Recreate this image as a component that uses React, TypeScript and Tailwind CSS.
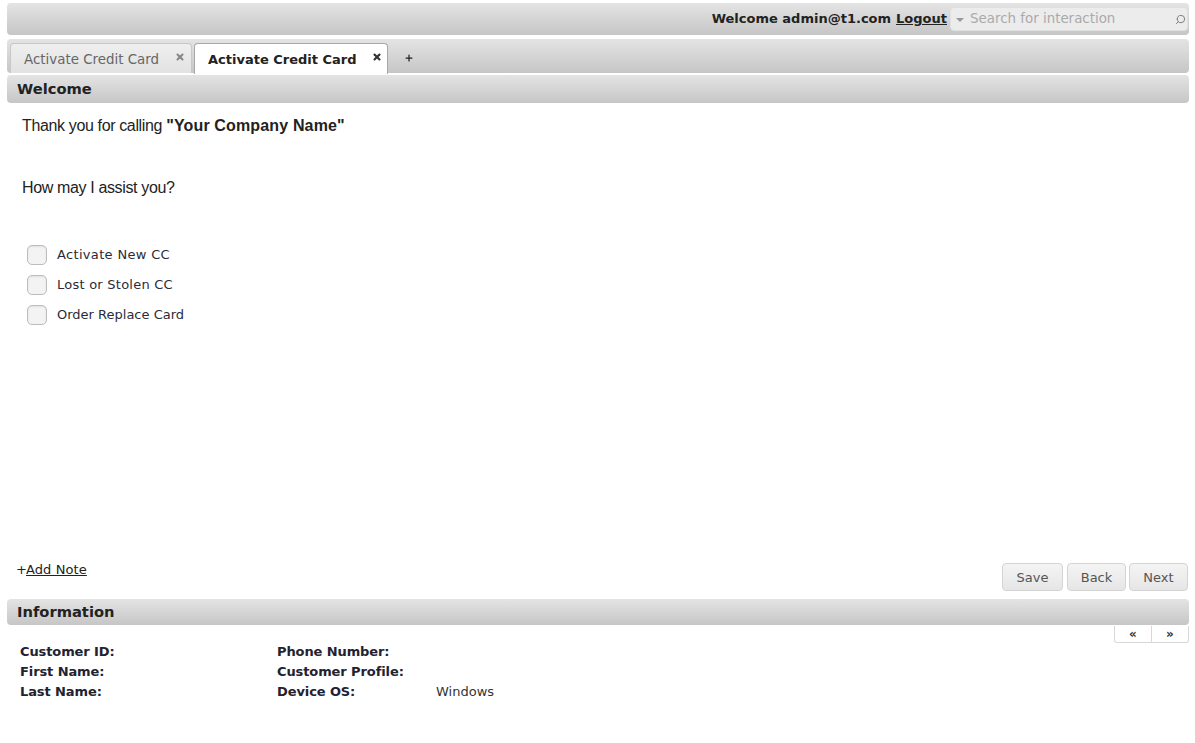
import React from 'react';
import { Search, X, Plus } from 'lucide-react';

const barClass = "bg-gradient-to-b from-[#e4e4e4] to-[#c6c6c6] rounded-[4px]";

const SectionBar = ({ title, className }: { title: string; className: string }) => (
  <div className={`${barClass} ${className} flex items-center pl-[10px] text-[14.7px] font-bold text-[#222222]`}>
    {title}
  </div>
);

const Option = ({ label, tracking }: { label: string; tracking: string }) => (
  <label className="flex items-center h-[30px]">
    <span className="w-5 h-5 rounded-[5px] border border-[#bdbdbd] bg-[#f3f3f3] shadow-[inset_0_1px_2px_rgba(0,0,0,0.08)]" />
    <span className={`ml-[10px] text-[13px] text-[#2b2b38] ${tracking}`}>{label}</span>
  </label>
);

const ActionButton = ({ label, width }: { label: string; width: string }) => (
  <button className={`${width} h-[28px] pt-[2px] rounded-[4px] border border-[#d4d4d4] bg-gradient-to-b from-[#f4f4f4] to-[#e6e6e6] text-[13px] text-[#555555]`}>
    {label}
  </button>
);

const InfoRow = ({ label, labelWidth, value }: { label: string; labelWidth?: string; value?: string }) => (
  <div className="flex items-center h-5 text-[13px]">
    <span className={`font-bold text-[#222230] tracking-[-0.1px] ${labelWidth ?? ''}`}>{label}</span>
    {value && <span className="text-[#333333]">{value}</span>}
  </div>
);

export default function App() {
  return (
    <div className="h-[743px] bg-white pl-[7px] pr-[6px] pt-[3px] flex flex-col font-['DejaVu_Sans','Liberation_Sans',sans-serif] overflow-hidden">
      {/* top bar */}
      <div className={`${barClass} h-[32px] shrink-0 flex items-center justify-end pr-[1px]`}>
        <span className="text-[13px] font-bold text-[#222222]">Welcome admin@t1.com</span>
        <a className="ml-[5px] text-[13px] font-bold text-[#222222] underline">Logout</a>
        <div className="ml-[3px] w-[238px] h-[24px] rounded-[4px] bg-[#ececec] border border-[#e0e0e0] flex items-center pl-[5px] pr-[1px]">
          <span className="w-0 h-0 border-x-[4px] border-x-transparent border-t-[4px] border-t-[#999999] mt-[1px]" />
          <span className="ml-[6px] text-[13.4px] text-[#aaaaaa] flex-1">Search for interaction</span>
          <Search className="w-[11px] h-[11px] text-[#777777] -scale-x-100" strokeWidth={2} />
        </div>
      </div>

      {/* tabs */}
      <div className={`${barClass} h-[34px] mt-[4px] shrink-0 flex items-end pl-[3px]`}>
        <div className="w-[182px] h-[30px] rounded-t-[4px] border border-b-0 border-[#c8c8c8] bg-gradient-to-b from-[#efefef] to-[#e2e2e2] flex items-center pl-[13px] pt-[3px] text-[13.4px] text-[#666666]">
          <span className="flex-1">Activate Credit Card</span>
          <X className="w-[10px] h-[10px] mr-[6px] mb-[7px] text-[#888888]" strokeWidth={5} />
        </div>
        <div className="ml-[2px] w-[194px] h-[31px] -mb-[1px] rounded-t-[4px] border border-b-0 border-[#a8a8a8] bg-white flex items-center pl-[13px] pt-[2px] text-[13px] font-bold text-[#222222] relative">
          <span className="flex-1">Activate Credit Card</span>
          <X className="w-[10px] h-[10px] mr-[5px] mb-[6px] text-[#333333]" strokeWidth={5} />
        </div>
        <Plus className="w-[10px] h-[10px] ml-[16px] mb-[10px] text-[#222222]" strokeWidth={3} />
      </div>

      <SectionBar title="Welcome" className="h-[28px] mt-[2px] shrink-0" />

      {/* script body */}
      <div className="flex-1 relative flex flex-col min-h-0">
        <div className="pl-[15px] pt-[13px] font-['Liberation_Sans',sans-serif] text-[16px] leading-[20px] text-[#222222] tracking-[-0.36px]">
          <p>Thank you for calling <b className="tracking-[0.15px]">"Your Company Name"</b></p>
          <p className="mt-[42px]">How may I assist you?</p>
        </div>
        <div className="pl-[20px] mt-[42px]">
          <Option label="Activate New CC" tracking="tracking-[0.33px]" />
          <Option label="Lost or Stolen CC" tracking="tracking-[0.24px]" />
          <Option label="Order Replace Card" tracking="tracking-normal" />
        </div>
        <div className="mt-auto flex items-start justify-between pl-[10px] pr-[1px] pb-[8px]">
          <div className="text-[13px] text-[#222222] -mt-[2px] tracking-[0.1px]">
            <span className="-ml-[1px] -mr-[1px]">+</span><a className="underline">Add Note</a>
          </div>
          <div className="flex gap-[3px] mt-[1px]">
            <ActionButton label="Save" width="w-[61px] mr-[1px]" />
            <ActionButton label="Back" width="w-[59px]" />
            <ActionButton label="Next" width="w-[59px]" />
          </div>
        </div>
      </div>

      <SectionBar title="Information" className="h-[26px] shrink-0" />

      {/* info panel */}
      <div className="h-[118px] shrink-0 relative pl-[13px] pt-[17px]">
        <div className="flex">
          <div className="w-[257px]">
            <InfoRow label="Customer ID:" />
            <InfoRow label="First Name:" />
            <InfoRow label="Last Name:" />
          </div>
          <div>
            <InfoRow label="Phone Number:" />
            <InfoRow label="Customer Profile:" />
            <InfoRow label="Device OS:" labelWidth="w-[159px]" value="Windows" />
          </div>
        </div>
        <div className="absolute right-0 top-[1px] w-[75px] h-[17px] rounded-b-[3px] border border-t-0 border-[#d8d8d8] flex text-[12px] font-bold leading-none text-[#333333]">
          <span className="flex-1 flex items-center justify-center border-r border-[#d8d8d8]">«</span>
          <span className="flex-1 flex items-center justify-center">»</span>
        </div>
      </div>
    </div>
  );
}
